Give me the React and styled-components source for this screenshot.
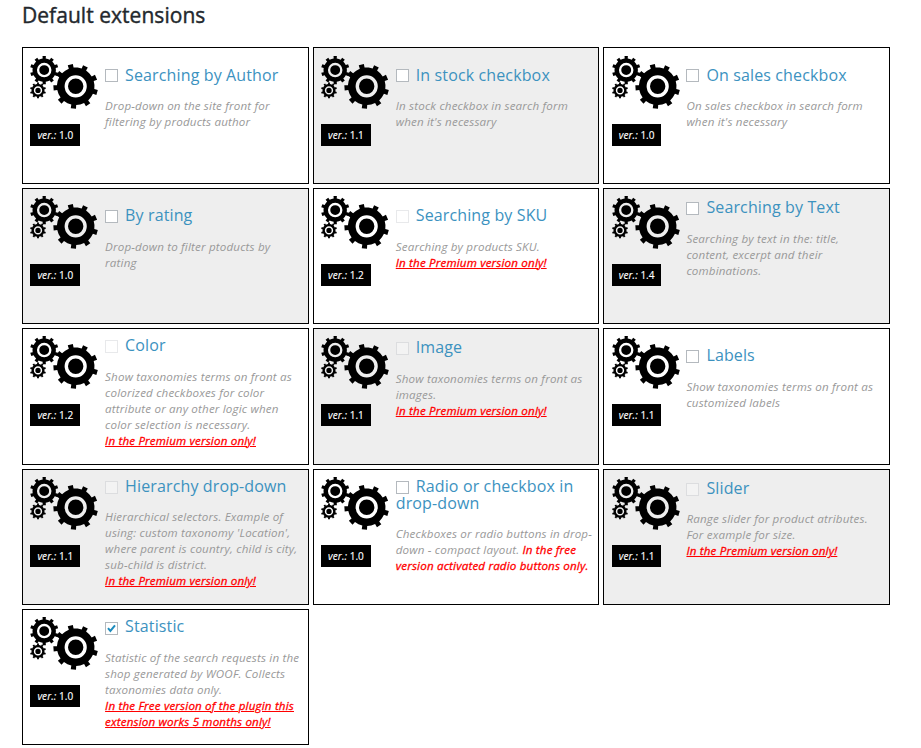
import React from "react";
import styled, { createGlobalStyle } from "styled-components";

const GlobalStyle = createGlobalStyle`
  body {
    margin: 0;
    background: #fff;
    font-family: "Open Sans", sans-serif;
  }
`;

const Page = styled.main`
  box-sizing: border-box;
  width: 890px;
  padding: 3px 0 0 22px;
`;

const Heading = styled.h3`
  margin: 0 0 20.4px;
  font-size: 21px;
  letter-spacing: 0.04px;
  line-height: 24px;
  font-weight: 400;
  color: #23282d;
  -webkit-text-stroke: 0.4px #23282d;
  white-space: nowrap;
`;

const Grid = styled.ul`
  display: grid;
  grid-template-columns: repeat(3, 1fr);
  grid-auto-rows: 136.4px;
  gap: 4px;
  margin: 0;
  padding: 0;
  list-style: none;
`;

const Card = styled.li`
  box-sizing: border-box;
  display: flex;
  border: 1px solid #000;
  background: ${(p) => (p.$shaded ? "#eee" : "#fff")};
  padding: 0 7px 0 7.4px;
`;

const Side = styled.div`
  display: flex;
  flex-direction: column;
  align-items: flex-start;
  width: 74.7px;
  flex: none;
  padding-top: 6.2px;
`;

const Version = styled.div`
  box-sizing: border-box;
  height: 22px;
  margin-top: 13px;
  padding: 0 7px;
  background: #000;
  color: #fff;
  font-size: 10px;
  line-height: 23px;
  white-space: nowrap;
  -webkit-text-stroke: 0.15px #fff;

  i {
    letter-spacing: 0.1px;
  }
`;

const Content = styled.div`
  flex: 1;
  min-width: 0;
  padding-top: ${(p) => p.$top - 0.7}px;
`;

const Title = styled.h4`
  margin: 0 -10px 0 0;
  font-size: 16px;
  letter-spacing: 0.13px;
  line-height: 16.7px;
  font-weight: 400;
  color: #3c92bf;
`;

const Check = styled.span`
  box-sizing: border-box;
  display: inline-flex;
  width: 13px;
  height: 13px;
  margin-right: 7px;
  vertical-align: -1.8px;
  border: 1px solid #b4b9be;
  background: #fff;
  opacity: ${(p) => (p.$disabled ? 0.3 : 1)};
`;

const Description = styled.p`
  margin: 14.8px -6px 0 0;
  font-size: 11.6px;
  letter-spacing: 0.17px;
  line-height: 16px;
  font-style: italic;
  color: #999;
  white-space: nowrap;
`;

const Notice = styled.span`
  color: #f00;
  -webkit-text-stroke: 0.3px #f00;
  text-decoration: ${(p) => (p.$plain ? "none" : "underline")};
`;

function gearPath(cx, cy, body, tip, count, start, half) {
  const points = [];
  const at = (r, deg) => {
    const a = (deg * Math.PI) / 180;
    points.push(`${(cx + r * Math.cos(a)).toFixed(2)},${(cy + r * Math.sin(a)).toFixed(2)}`);
  };
  for (let i = 0; i < count; i += 1) {
    const a = start + (i * 360) / count;
    at(body, a - half);
    at(tip, a - half * 0.9);
    at(tip, a + half * 0.9);
    at(body, a + half);
    at(body, a + 180 / count);
  }
  return `M${points.join("L")}Z`;
}

const GEARS = [
  { cx: 45.7, cy: 31.3, body: 18.8, tip: 22.4, count: 9, start: -104, half: 7.5, ring: 9.4, stroke: 3.4 },
  { cx: 14.2, cy: 15.1, body: 11.7, tip: 14.2, count: 10, start: -90, half: 7.5, ring: 6.1, stroke: 2.3 },
  { cx: 8, cy: 35.4, body: 6.5, tip: 8, count: 10, start: -90, half: 8, ring: 3.4, stroke: 1.5 },
];

const GearsSvg = styled.svg`
  display: block;
  width: 68px;
  height: 56px;
`;

function Gears({ shaded }) {
  return (
    <GearsSvg viewBox="0 0 68 56" aria-hidden="true">
      {GEARS.map((g) => (
        <g key={g.cx}>
          <path d={gearPath(g.cx, g.cy, g.body, g.tip, g.count, g.start, g.half)} />
          <circle cx={g.cx} cy={g.cy} r={g.ring} fill="none" stroke={shaded ? "#eee" : "#fff"} strokeWidth={g.stroke} />
        </g>
      ))}
    </GearsSvg>
  );
}

const PREMIUM = ["In the Premium version only!"];

const EXTENSIONS = [
  { title: "Searching by Author", version: "1.0", top: 19, lines: ["Drop-down on the site front for", "filtering by products author"] },
  { title: "In stock checkbox", version: "1.1", top: 19, lines: ["In stock checkbox in search form", "when it's necessary"] },
  { title: "On sales checkbox", version: "1.0", top: 19, lines: ["On sales checkbox in search form", "when it's necessary"] },
  { title: "By rating", version: "1.0", top: 19, lines: ["Drop-down to filter ptoducts by", "rating"] },
  { title: "Searching by SKU", version: "1.2", top: 19, disabled: true, lines: ["Searching by products SKU."], notice: PREMIUM },
  { title: "Searching by Text", version: "1.4", top: 11, lines: ["Searching by text in the: title,", "content, excerpt and their", "combinations."] },
  { title: "Color", version: "1.2", top: 9, disabled: true, lines: ["Show taxonomies terms on front as", "colorized checkboxes for color", "attribute or any other logic when", "color selection is necessary."], notice: PREMIUM },
  { title: "Image", version: "1.1", top: 11, disabled: true, lines: ["Show taxonomies terms on front as", "images."], notice: PREMIUM },
  { title: "Labels", version: "1.1", top: 19, lines: ["Show taxonomies terms on front as", "customized labels"] },
  { title: "Hierarchy drop-down", version: "1.1", top: 9, disabled: true, lines: ["Hierarchical selectors. Example of", "using: custom taxonomy 'Location',", "where parent is country, child is city,", "sub-child is district."], notice: PREMIUM },
  { title: "Radio or checkbox in drop-down", version: "1.0", top: 9, lines: ["Checkboxes or radio buttons in drop-", "down - compact layout. "], notice: ["In the free", "version activated radio buttons only."], inline: true },
  { title: "Slider", version: "1.1", top: 11, disabled: true, lines: ["Range slider for product atributes.", "For example for size."], notice: PREMIUM },
  { title: "Statistic", version: "1.0", top: 9, checked: true, lines: ["Statistic of the search requests in the", "shop generated by WOOF. Collects", "taxonomies data only."], notice: ["In the Free version of the plugin this", "extension works 5 months only!"] },
];

function Lines({ items }) {
  return items.map((line, i) => (
    <React.Fragment key={line}>
      {i > 0 && <br />}
      {line}
    </React.Fragment>
  ));
}

function Extension({ item, shaded }) {
  return (
    <Card $shaded={shaded}>
      <Side>
        <Gears shaded={shaded} />
        <Version>
          <i>ver.:</i> {item.version}
        </Version>
      </Side>
      <Content $top={item.top}>
        <Title>
          <Check role="checkbox" aria-checked={!!item.checked} $disabled={item.disabled}>
            {item.checked && (
              <svg width="11" height="11" viewBox="0 0 11 11" fill="none" stroke="#1e8cbe" strokeWidth="2">
                <path d="M2 5.2L4.4 8L9 2.4" />
              </svg>
            )}
          </Check>
          {item.title}
        </Title>
        <Description>
          <Lines items={item.lines} />
          {item.notice && !item.inline && <br />}
          {item.notice && (
            <Notice $plain={item.inline}>
              <Lines items={item.notice} />
            </Notice>
          )}
        </Description>
      </Content>
    </Card>
  );
}

export default function App() {
  return (
    <>
      <GlobalStyle />
      <Page>
        <Heading>Default extensions</Heading>
        <Grid>
          {EXTENSIONS.map((item, i) => (
            <Extension key={item.title} item={item} shaded={i % 2 === 1} />
          ))}
        </Grid>
      </Page>
    </>
  );
}
